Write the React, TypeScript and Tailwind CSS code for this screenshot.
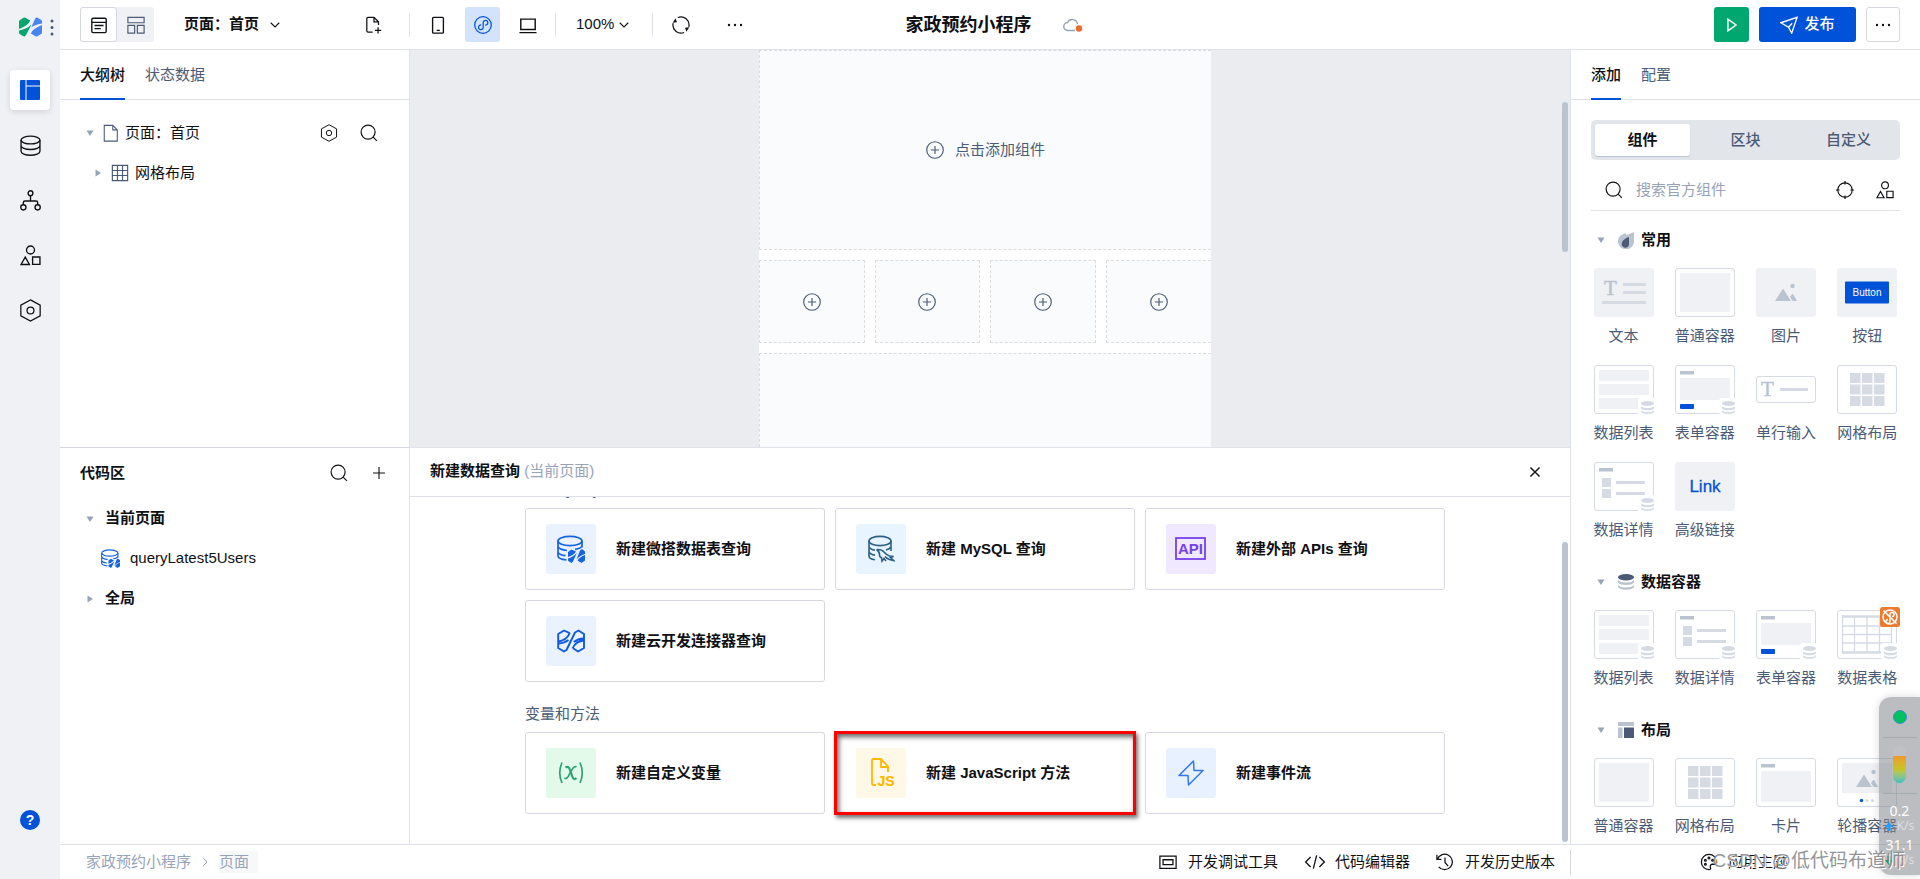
import { useState } from "react";
import type { ReactNode } from "react";

type IconProps = { size?: number; className?: string };

const Svg = ({
  size = 18,
  className = "",
  width = 1.3,
  children,
}: IconProps & { width?: number; children: ReactNode }) => (
  <svg
    width={size}
    height={size}
    viewBox="0 0 20 20"
    fill="none"
    stroke="currentColor"
    strokeWidth={width}
    className={`shrink-0 ${className}`}
    aria-hidden="true"
  >
    {children}
  </svg>
);

/* Icons */
const SearchIcon = (p: IconProps) => (
  <Svg {...p}>
    <circle cx="9" cy="9" r="7.8" />
    <path d="M14.6 14.6 18.8 18.8" />
  </Svg>
);

const HexIcon = (p: IconProps) => (
  <Svg {...p} width={1.1}>
    <path d="M10 .8 18.4 5.4V14.6L10 19.2 1.6 14.6V5.4Z" />
    <circle cx="10" cy="10" r="3" />
  </Svg>
);

const ShapesIcon = (p: IconProps) => (
  <Svg {...p}>
    <circle cx="10" cy="4.8" r="3.8" />
    <path d="M5 11.6 9 18.6H1Z M12 11.4h7v7h-7Z" />
  </Svg>
);

const DatabaseIcon = (p: IconProps) => (
  <Svg {...p}>
    <ellipse cx="10" cy="4.8" rx="9" ry="3.7" />
    <path d="M1 4.8v10.7C1 17.6 5 19.3 10 19.3s9-1.7 9-3.8V4.8M1 10c0 2.1 4 3.8 9 3.8s9-1.7 9-3.8" />
  </Svg>
);

const FlowIcon = (p: IconProps) => (
  <Svg {...p}>
    <circle cx="10" cy="3" r="2.3" />
    <circle cx="3.2" cy="16.5" r="2.5" />
    <circle cx="16.8" cy="16.5" r="2.5" />
    <path d="M10 5.3V10.5M3.2 14V12q0-1.5 1.5-1.5h10.6q1.5 0 1.5 1.5v2" />
  </Svg>
);

const LayoutIcon = () => (
  <svg width="20" height="20" viewBox="0 0 20 20" fill="#0052d9" aria-hidden="true">
    <path d="M1 0h4.5v20H1a1 1 0 0 1-1-1V1a1 1 0 0 1 1-1ZM6.5 0H19a1 1 0 0 1 1 1v4.5H6.5ZM6.5 6.5H20V19a1 1 0 0 1-1 1H6.5Z" />
  </svg>
);

const PlusCircle = (p: IconProps) => (
  <Svg {...p}>
    <circle cx="10" cy="10" r="9.2" />
    <path d="M10 5.5v9M5.5 10h9" />
  </Svg>
);

const PlusIcon = () => (
  <Svg size={14} width={1.6}>
    <path d="M10 1.5v17M1.5 10h17" />
  </Svg>
);

const Chevron = () => (
  <Svg size={10} width={2.2} className="pointer-events-none">
    <path d="M1.5 5.5 10 14l8.5-8.5" />
  </Svg>
);

const Dots = () => (
  <svg width="16" height="4" viewBox="0 0 16 4" fill="currentColor" aria-hidden="true">
    <circle cx="2" cy="2" r="1.2" />
    <circle cx="8" cy="2" r="1.2" />
    <circle cx="14" cy="2" r="1.2" />
  </svg>
);

const Caret = ({ open = true }: { open?: boolean }) => (
  <svg width="8" height="8" viewBox="0 0 8 8" fill="#97a3b7" className="shrink-0" aria-hidden="true">
    {open ? <path d="M.5 1.5h7L4 7Z" /> : <path d="M1.5.5v7L7 4Z" />}
  </svg>
);

const Logo = () => (
  <svg width="23" height="20" viewBox="0 0 23 20" aria-hidden="true">
    <g fill="#07a66c">
      <path d="M0 4.5Q0 3.5 1 3L4.5.8Q5.5.2 6.5.8L11.2 3.5Q10 8 0 12Z" />
      <path d="M0 13.5Q8 12 12.5 7.5L7 18Q6 20.2 4 19L1 17.2Q0 16.5 0 15.5Z" />
    </g>
    <g fill="#4586f3" transform="rotate(180 11.5 10)">
      <path d="M0 4.5Q0 3.5 1 3L4.5.8Q5.5.2 6.5.8L11.2 3.5Q10 8 0 12Z" />
      <path d="M0 13.5Q8 12 10.8 9.5L7 18Q6 20.2 4 19L1 17.2Q0 16.5 0 15.5Z" />
    </g>
  </svg>
);

const WedaTableIcon = ({ size = 28 }: IconProps) => (
  <svg width={size} height={size} viewBox="0 0 28 28" fill="none" stroke="#1664e0" strokeWidth="1.7" className="shrink-0" aria-hidden="true">
    <ellipse cx="13" cy="6" rx="12" ry="4.6" />
    <path d="M1 6v15q0 3 8.5 4M25 6v6.5M1 11.5q1 3 9 4M1 17q1 3 7.5 3.7M25 11q-1 2.5-7 3.3" />
    <g fill="#1664e0" stroke="none">
      <path d="M11 17 14.5 14.5 19 16.5Q17 20 11 22Z" />
      <path d="M11 23.500Q17 21.500 20 17.500L16 26.500 14.500 28 11 25.700Z" />
      <path d="M28 25.500 24.500 28 20.500 25.500Q22.500 22 28 20Z" />
      <path d="M28 19Q22.500 20.500 19.500 24.500L23 15.500 25 14 28 16.500Z" />
    </g>
  </svg>
);

const MysqlIcon = () => (
  <svg width="28" height="28" viewBox="0 0 28 28" fill="none" stroke="#2c5f85" strokeWidth="1.6" aria-hidden="true">
    <ellipse cx="13" cy="6" rx="11" ry="4.6" />
    <path d="M2 6v15q0 3 6 3.8M24 6v10M2 11.5q1 3 6 3.8M2 16.5q1 3 6 3.6M19 15q4-1 5-3.5" />
    <path d="M9.5 14.5q5-.5 7.5 2.5t5.5 4l4 .5-3 1 3 3-4-1q-3-1-4.5-3M9.5 14.5q3 2 3 5t2 3l.5 3.5 2-2.5 2 2.5" />
  </svg>
);

const ApiIcon = () => (
  <svg width="32" height="24" viewBox="0 0 32 24" aria-hidden="true">
    <rect x="1" y="1" width="29" height="21" fill="none" stroke="#7541e8" strokeWidth="1.8" />
    <text x="15.5" y="17" textAnchor="middle" fontSize="15" fill="#7541e8" fontFamily="Liberation Sans, sans-serif">
      API
    </text>
  </svg>
);

const ConnectorIcon = () => (
  <svg width="28" height="24" viewBox="0 0 28 24" fill="none" stroke="#0e5ae0" strokeWidth="1.9" strokeLinejoin="round" aria-hidden="true">
    <path d="M12.8 4.2 7 1.5 1.2 5v14L7 22.5l2.5-1.5L18 3.5 21.5 1.5 27 5v14l-6 3.5-5-3.2" />
    <path d="M1.2 12.5Q9 12 12.8 4.2M1.5 14.5q6-.3 10-3.5M27 11.5Q19 12 15.5 19.3M26.8 9.5q-6 .3-10 3.5" />
  </svg>
);

const VariableIcon = () => (
  <svg width="26" height="24" viewBox="0 0 26 24" fill="none" stroke="#2ba471" strokeWidth="1.7" aria-hidden="true">
    <path d="M4 1.5Q-.5 12 4 22M22 1.5q4.5 10.5 0 20.5" />
    <path d="M7.5 6.5q3-2 4.3 2l2.7 7.5q1.3 3.5 4 1" strokeWidth="2.2" />
    <path d="M18.5 6q-2.5-1.5-5 3.5l-2.5 4.5q-2 4.5-4.5 3" />
  </svg>
);

const JsIcon = () => (
  <svg width="28" height="30" viewBox="0 0 28 30" fill="none" stroke="#ffb800" strokeWidth="1.8" aria-hidden="true">
    <path d="M9 27H6.5Q5 27 5 25.5V2.5Q5 1 6.5 1H14l7 7.5V14M14 1.5V9H21" />
    <text x="10.5" y="28" fontSize="14" fill="#ffb800" strokeWidth=".2" fontFamily="Liberation Sans, sans-serif">
      JS
    </text>
  </svg>
);

const EventIcon = () => (
  <svg width="26" height="26" viewBox="0 0 26 26" fill="none" stroke="#3377f5" strokeWidth="1.5" strokeLinejoin="round" aria-hidden="true">
    <path d="M15.5 1 1 15.5h9L10.5 25 25 10.5h-9Z" />
  </svg>
);

/* Component thumbnails, drawn on a 60 x 49 board */
const Frame = () => <rect x=".5" y=".5" width="59" height="48" rx="2.5" fill="#fff" stroke="#d5dae5" />;
const Board = () => <rect width="60" height="49" rx="3" fill="#f0f1f5" />;

const DbBadge = () => (
  <g>
    <rect x="44" y="33" width="18" height="18" rx="3" fill="#fff" />
    <g fill="#d5dae3">
      <ellipse cx="53.5" cy="38.5" rx="6.5" ry="2.5" />
      <path d="M47 41q1 2 6.5 2t6.5-2v2.2q-1 2-6.5 2t-6.5-2Z" />
      <path d="M47 45q1 2 6.5 2t6.5-2v1.7q-1 2-6.5 2t-6.5-2Z" />
    </g>
  </g>
);

const Mountain = ({ y = 0 }: { y?: number }) => (
  <g fill="#bac4d0" transform={`translate(0 ${y})`}>
    <path d="M19 33 27 20.5 35 33Z M36.5 33 34 29 36 26 37 26 41 33Z" />
    <circle cx="36.5" cy="18" r="2.2" />
  </g>
);

const SerifT = ({ x, y }: { x: number; y: number }) => (
  <text x={x} y={y} fontSize="21" fill="#bac4d0" stroke="#bac4d0" strokeWidth=".5" fontFamily="Liberation Serif, serif">
    T
  </text>
);

const Thumb = ({ kind }: { kind: string }) => {
  switch (kind) {
    case "text":
      return (
        <>
          <Board />
          <SerifT x={10} y={27} />
          <path d="M29 16.5h23M29 24.5h23M8 34.5h44" stroke="#d5dae5" strokeWidth="3" />
        </>
      );
    case "container":
      return (
        <>
          <Frame />
          <rect x="5" y="5" width="50" height="39" rx="1" fill="#f0f1f5" />
        </>
      );
    case "image":
      return (
        <>
          <Board />
          <Mountain />
        </>
      );
    case "button":
      return (
        <>
          <Board />
          <rect x="8" y="13.5" width="44" height="22" rx="1" fill="#0052d9" />
          <text x="30" y="28" textAnchor="middle" fontSize="10" fill="#fff" fontFamily="Liberation Sans, sans-serif">
            Button
          </text>
        </>
      );
    case "list":
      return (
        <>
          <Frame />
          <path d="M5 5h50v11H5ZM5 19h50v11H5ZM5 33h50v11H5Z" fill="#f0f1f5" />
          <DbBadge />
        </>
      );
    case "form":
      return (
        <>
          <Frame />
          <rect x="5" y="6" width="14" height="3.5" fill="#bac4d0" />
          <rect x="5" y="13" width="50" height="22" fill="#f0f1f5" />
          <rect x="5" y="39" width="14" height="5" rx="1" fill="#0052d9" />
          <DbBadge />
        </>
      );
    case "input":
      return (
        <>
          <rect x=".5" y="11.5" width="59" height="26" rx="2.5" fill="#fff" stroke="#d5dae5" />
          <SerifT x={5} y={31} />
          <path d="M24 24.5h28" stroke="#d5dae5" strokeWidth="3" />
        </>
      );
    case "grid":
      return (
        <>
          <Frame />
          {[13, 25, 37].map((x) =>
            [8, 19.5, 31].map((y) => (
              <rect key={`${x}-${y}`} x={x} y={y} width="10.5" height="10" fill="#d5dae3" />
            ))
          )}
        </>
      );
    case "detail":
      return (
        <>
          <Frame />
          <rect x="5" y="6" width="14" height="3.5" fill="#bac4d0" />
          <path d="M8 16h9v9H8ZM8 27h9v9H8Z" fill="#d5dae3" />
          <path d="M22 20.5h29M22 31.5h29" stroke="#d5dae3" strokeWidth="3" />
          <DbBadge />
        </>
      );
    case "link":
      return (
        <>
          <Board />
          <text x="30" y="30" textAnchor="middle" fontSize="17" fill="#0052d9" stroke="#0052d9" strokeWidth=".3" fontFamily="Liberation Sans, sans-serif">
            Link
          </text>
        </>
      );
    case "table":
      return (
        <>
          <Frame />
          <path d="M5.5 5v38M17.5 7v36M30 7v36M42.5 7v36M54.5 5v38M5 16h50M5 24.5h50M5 33h50" stroke="#d5dae5" strokeWidth="1.3" />
          <path d="M5 6.5h50M5 42.5h50" stroke="#d5dae5" strokeWidth="2.5" />
          <DbBadge />
          <rect x="43" y="-3" width="20" height="20" rx="2.5" fill="#ed7b2f" />
          <g fill="none" stroke="#fff" strokeWidth="1.5">
            <circle cx="53" cy="7" r="7" />
            <path d="M51 9.500a2 2 0 1 0 2 1.500V4.500a2 2 0 1 1 2 2M46.500.5l13 13" />
          </g>
        </>
      );
    case "card":
      return (
        <>
          <Frame />
          <rect x="5" y="6" width="14" height="3.5" fill="#bac4d0" />
          <rect x="5" y="13" width="50" height="31" fill="#f0f1f5" />
        </>
      );
    default:
      return (
        <>
          <Frame />
          <rect x="5" y="5" width="50" height="30" fill="#f0f1f5" />
          <Mountain y={-4} />
          <circle cx="24.5" cy="42.5" r="1.7" fill="#0052d9" />
          <circle cx="30" cy="42.5" r="1.5" fill="#d5dae3" />
          <circle cx="35.5" cy="42.5" r="1.5" fill="#d5dae3" />
        </>
      );
  }
};

const flameIcon = (
  <svg width="16" height="17" viewBox="0 0 16 17" aria-hidden="true">
    <path d="M16 0v9a8 8 0 1 1-14-5Q5 2 8 1v2q4-1 8-3Z" fill="#bac4d0" />
    <path d="M11 5v6.5a3.7 3.7 0 1 1-7-1Q5 7 11 5Z" fill="#4b5b76" />
  </svg>
);

const stackIcon = (
  <svg width="16" height="16" viewBox="0 0 16 16" fill="#bac4d0" aria-hidden="true">
    <ellipse cx="8" cy="3.3" rx="8" ry="3.2" fill="#4b5b76" />
    <path d="M0 6q2 2.5 8 2.5T16 6v2.5q-2 2.5-8 2.5T0 8.5ZM0 11q2 2.5 8 2.5t8-2.5v2q-2 2.8-8 2.8T0 13Z" />
  </svg>
);

const columnsIcon = (
  <svg width="16" height="16" viewBox="0 0 16 16" fill="#bac4d0" aria-hidden="true">
    <path d="M0 0h16v4H0ZM0 5.5h4.5V16H0Z" />
    <path d="M6 5.5h10V16H6Z" fill="#4b5b76" />
  </svg>
);

const categories = [
  {
    name: "常用",
    icon: flameIcon,
    items: [
      ["文本", "text"],
      ["普通容器", "container"],
      ["图片", "image"],
      ["按钮", "button"],
      ["数据列表", "list"],
      ["表单容器", "form"],
      ["单行输入", "input"],
      ["网格布局", "grid"],
      ["数据详情", "detail"],
      ["高级链接", "link"],
    ],
  },
  {
    name: "数据容器",
    icon: stackIcon,
    items: [
      ["数据列表", "list"],
      ["数据详情", "detail"],
      ["表单容器", "form"],
      ["数据表格", "table"],
    ],
  },
  {
    name: "布局",
    icon: columnsIcon,
    items: [
      ["普通容器", "container"],
      ["网格布局", "grid"],
      ["卡片", "card"],
      ["轮播容器", "carousel"],
    ],
  },
];

const queryCards = [
  { label: "新建微搭数据表查询", bg: "bg-[#ebf2ff]", icon: <WedaTableIcon /> },
  { label: "新建 MySQL 查询", bg: "bg-[#e8f4ff]", icon: <MysqlIcon /> },
  { label: "新建外部 APIs 查询", bg: "bg-[#f0e8ff]", icon: <ApiIcon /> },
  { label: "新建云开发连接器查询", bg: "bg-[#ebf2ff]", icon: <ConnectorIcon /> },
];

const methodCards = [
  { label: "新建自定义变量", bg: "bg-[#e3f9e9]", icon: <VariableIcon /> },
  { label: "新建 JavaScript 方法", bg: "bg-[#fff8e6]", icon: <JsIcon />, marked: true },
  { label: "新建事件流", bg: "bg-[#e8f1ff]", icon: <EventIcon /> },
];

const Card = ({ label, bg, icon, marked }: { label: string; bg: string; icon: ReactNode; marked?: boolean }) => (
  <button className="relative flex h-[82px] items-center gap-5 rounded-[3px] border border-[#d5d8e2] bg-white px-5 text-left font-bold">
    <span className={`flex size-[50px] shrink-0 items-center justify-center rounded-[3px] ${bg}`}>{icon}</span>
    <span>{label}</span>
    {marked && (
      <span className="absolute -inset-[2px] border-3 border-[#ff0000] shadow-[2px_3px_4px_rgba(0,0,0,0.55),inset_2px_3px_5px_rgba(0,0,0,0.6)]" />
    )}
  </button>
);

const Tabs = ({ items }: { items: string[] }) => {
  const [active, setActive] = useState(items[0]);
  return (
    <div className="flex h-[50px] shrink-0 gap-5 border-b border-[#dfe2e8] px-5">
      {items.map((item) => (
        <button
          key={item}
          onClick={() => setActive(item)}
          className={
            item === active
              ? "-mb-px border-b-2 border-[#0052d9] pt-[3px] font-medium"
              : "-mb-px border-b-2 border-transparent pt-[3px] text-[#4b5b76]"
          }
        >
          {item}
        </button>
      ))}
    </div>
  );
};

const Sidebar = () => (
  <nav className="flex w-[60px] shrink-0 flex-col items-center bg-[#f0f1f5] pb-[49px]">
    <div className="flex h-[70px] items-start gap-2 pt-[17px] pl-3">
      <Logo />
      <svg width="4" height="20" viewBox="0 0 4 20" fill="#4b5b76" aria-hidden="true">
        <circle cx="2" cy="4" r="1.5" />
        <circle cx="2" cy="10.5" r="1.5" />
        <circle cx="2" cy="17" r="1.5" />
      </svg>
    </div>
    <div className="flex flex-1 flex-col gap-[15px]">
      {[
        { name: "页面", icon: <LayoutIcon /> },
        { name: "数据", icon: <DatabaseIcon size={21} /> },
        { name: "流程", icon: <FlowIcon size={21} /> },
        { name: "组件库", icon: <ShapesIcon size={21} /> },
        { name: "设置", icon: <HexIcon size={23} /> },
      ].map((item, i) => (
        <button
          key={item.name}
          aria-label={item.name}
          className={
            i === 0
              ? "flex size-10 items-center justify-center rounded bg-white shadow-[0_2px_6px_rgba(0,0,0,0.12)]"
              : "flex size-10 items-center justify-center"
          }
        >
          {item.icon}
        </button>
      ))}
    </div>
    <button aria-label="帮助" className="flex size-5 items-center justify-center rounded-full bg-[#0052d9] text-sm font-bold text-white">
      ?
    </button>
  </nav>
);

const Divider = () => <span className="h-6 w-px bg-[#dfe2e8]" />;

const Header = () => (
  <header className="flex h-[50px] shrink-0 items-center border-b border-[#dfe2e8] px-5">
    <div className="flex flex-1 items-center">
      <div className="flex h-[35px] w-[74px] rounded-[3px] bg-[#f0f1f5]">
        <button aria-label="编辑" className="flex w-[37px] items-center justify-center rounded-[3px] border border-[#d5d8e2] bg-white">
          <Svg size={18} width={1.5}>
            <rect x="2" y="2.5" width="16" height="16" rx="1.5" />
            <path d="M2 7h16M5 10.5h10M5 14h7" />
          </Svg>
        </button>
        <button aria-label="布局" className="flex w-[37px] items-center justify-center text-[#4b5b76]">
          <Svg size={18} width={1.3}>
            <path d="M1 1.5h18v6H1ZM1 10.5h7.5v8.5H1ZM11.5 10.5H19v8.5h-7.5Z" />
          </Svg>
        </button>
      </div>
      <label className="ml-[30px] flex w-[181px] items-center gap-[10px]">
        <select aria-label="页面" className="appearance-none font-bold outline-none">
          <option>页面：首页</option>
        </select>
        <Chevron />
      </label>
      <div className="flex items-center">
        <button aria-label="新建页面" className="flex w-[18px] justify-center">
          <Svg size={18} width={1.4}>
            <path d="M8.5 18H3.5Q2 18 2 16.5V3Q2 1.5 3.5 1.5H10l5 5V10M10 1.5v5h5M14.5 12.5v7M11 16h7" />
          </Svg>
        </button>
        <span className="ml-[26px] flex items-center gap-[10px]">
          <Divider />
          <button aria-label="手机" className="flex size-[35px] items-center justify-center">
            <Svg size={18} width={1.5}>
              <rect x="4" y="1.5" width="12" height="17.5" rx="1" />
              <path d="M8.5 16h3.5" />
            </Svg>
          </button>
          <button aria-label="小程序" className="flex size-[35px] items-center justify-center rounded-[3px] bg-[#d4e3fc] text-[#0052d9]">
            <Svg size={18} width={1.4}>
              <circle cx="10" cy="10" r="9.2" />
              <path d="M8 10a2.6 2.6 0 1 0 2.2 2.6V7.4A2.6 2.6 0 1 1 12.4 10" />
            </Svg>
          </button>
          <button aria-label="电脑" className="flex size-[35px] items-center justify-center">
            <Svg size={18} width={1.6}>
              <path d="M2 3.5h16V15H2ZM.5 18.5h19" />
            </Svg>
          </button>
          <Divider />
        </span>
        <label className="ml-5 flex items-center gap-[4px]">
          <select aria-label="缩放" className="appearance-none outline-none">
            <option>100%</option>
          </select>
          <Chevron />
        </label>
        <span className="ml-[23px] flex items-center">
          <Divider />
          <button aria-label="刷新" className="mr-[37px] ml-[19px] flex">
            <Svg size={18} width={1.4}>
              <path d="M6.5 1.7A9 9 0 0 1 18.7 12M13.5 18.3A9 9 0 0 1 1.3 8" />
              <path d="M4 2.5.8 7.5 5.5 7ZM16 17.5l3.2-5-4.7.5Z" fill="currentColor" stroke="none" />
            </Svg>
          </button>
          <button aria-label="更多">
            <Dots />
          </button>
        </span>
      </div>
    </div>
    <div className="flex items-center gap-[31px] pl-2">
      <h1 className="text-lg font-bold">家政预约小程序</h1>
      <svg width="20" height="16" viewBox="0 0 20 16" fill="none" aria-hidden="true">
        <path d="M12 13.5H5A4 4 0 0 1 4.5 5.5 5.3 5.3 0 0 1 14.5 7" stroke="#97a3b7" strokeWidth="1.4" />
        <circle cx="16" cy="11.5" r="3.2" fill="#ed6b2f" />
      </svg>
    </div>
    <div className="flex flex-1 items-center justify-end gap-[10px]">
      <button aria-label="预览" className="flex size-[35px] items-center justify-center rounded-[3px] bg-[#00a870] text-white">
        <Svg size={18} width={1.6}>
          <path d="M5.5 3.5v13L14.5 10Z" />
        </Svg>
      </button>
      <button className="flex h-[35px] w-[97px] items-center justify-center gap-[6px] rounded-[3px] bg-[#0052d9] font-medium text-white">
        <Svg size={18} width={1.5}>
          <path d="M1 7.5 19 1.5 13 19 9.5 12.5ZM9.5 12.5 13.5 8" />
        </Svg>
        发布
      </button>
      <button aria-label="更多操作" className="flex h-[35px] w-[34px] items-center justify-center rounded-[3px] border border-[#d5d8e2]">
        <Dots />
      </button>
    </div>
  </header>
);

const LeftPanel = () => (
  <aside className="flex w-[350px] shrink-0 flex-col border-r border-[#dfe2e8]">
    <section className="flex min-h-0 flex-1 flex-col">
      <Tabs items={["大纲树", "状态数据"]} />
      <div className="pt-[13px]">
        <div className="flex h-10 items-center pr-[31px] pl-[26px]">
          <Caret />
          <Svg size={18} width={1.2} className="mr-[5px] ml-2 text-[#4b5b76]">
            <path d="M2.5 1.5h9.5l5 5v12.5h-14.5ZM12 1.5v5h5" />
          </Svg>
          <span className="flex-1">页面：首页</span>
          <button aria-label="页面设置" className="mr-[22px]">
            <HexIcon />
          </button>
          <button aria-label="搜索">
            <SearchIcon />
          </button>
        </div>
        <div className="flex h-10 items-center pl-[34px]">
          <Caret open={false} />
          <Svg size={18} width={1.3} className="mr-[6px] ml-[9px] text-[#4b5b76]">
            <path d="M1.5 1.5h17v17h-17ZM7.2 1.5v17M12.8 1.5v17M1.5 7.2h17M1.5 12.8h17" />
          </Svg>
          网格布局
        </div>
      </div>
    </section>
    <section className="min-h-0 flex-1 border-t border-[#d5d8e2]">
      <div className="flex h-[51px] items-center pr-[23px] pl-5">
        <h2 className="flex-1 font-bold">代码区</h2>
        <button aria-label="搜索代码" className="mr-6">
          <SearchIcon />
        </button>
        <button aria-label="新建代码">
          <PlusIcon />
        </button>
      </div>
      <div className="flex h-10 items-center gap-[11px] pl-[26px] font-bold">
        <Caret />
        当前页面
      </div>
      <div className="flex h-10 items-center gap-[10px] pl-[41px]">
        <WedaTableIcon size={19} />
        queryLatest5Users
      </div>
      <div className="flex h-10 items-center gap-[11px] pl-[26px] font-bold">
        <Caret open={false} />
        全局
      </div>
    </section>
  </aside>
);

const Canvas = () => (
  <section className="flex min-h-0 flex-1 overflow-hidden bg-[#ebecf0]">
    <div className="flex flex-1 justify-center">
      <div className="flex w-[452px] flex-col gap-[10px] bg-white text-[#4b5b76]">
        <button className="flex h-[200px] shrink-0 items-center justify-center gap-[11px] border border-r-0 border-dashed border-[#dcdcdc] bg-[#fafbfd]">
          <PlusCircle />
          点击添加组件
        </button>
        <div className="grid shrink-0 grid-cols-4 gap-[10px]">
          {[0, 1, 2, 3].map((i) => (
            <button
              key={i}
              aria-label="添加组件"
              className="flex h-[83px] items-center justify-center border border-dashed border-[#dcdcdc] bg-[#fafbfd] last:border-r-0"
            >
              <PlusCircle />
            </button>
          ))}
        </div>
        <div className="flex-1 border border-r-0 border-b-0 border-dashed border-[#dcdcdc] bg-[#fafbfd]" />
      </div>
    </div>
    <div className="w-[10px] px-[2px] pt-[52px]">
      <div className="h-[150px] rounded-full bg-[#bac4d0]" />
    </div>
  </section>
);

const QueryPanel = () => (
  <section className="flex min-h-0 flex-1 flex-col border-t border-[#dfe2e8]">
    <div className="flex h-[49px] shrink-0 items-center border-b border-[#dfe2e8] pr-7 pl-5">
      <h2 className="flex-1 font-bold">
        新建数据查询 <span className="font-normal text-[#97a3b7]">(当前页面)</span>
      </h2>
      <button aria-label="关闭">
        <Svg size={14} width={2}>
          <path d="M3.5 3.5l13 13M16.5 3.5l-13 13" />
        </Svg>
      </button>
    </div>
    <div className="flex min-h-0 flex-1">
      <div className="flex min-w-0 flex-1 flex-col items-center justify-end overflow-hidden pb-[30px]">
        <div className="w-[920px] max-w-full">
          <h3 className="mb-2 leading-5 text-[#4b5b76]">查询 Query</h3>
          <div className="grid grid-cols-3 gap-[10px]">
            {queryCards.map((card) => (
              <Card key={card.label} {...card} />
            ))}
          </div>
          <h3 className="mt-[22px] mb-2 leading-5 text-[#4b5b76]">变量和方法</h3>
          <div className="grid grid-cols-3 gap-[10px]">
            {methodCards.map((card) => (
              <Card key={card.label} {...card} />
            ))}
          </div>
        </div>
      </div>
      <div className="flex w-[10px] flex-col justify-end px-[2px] pb-[2px]">
        <div className="h-[300px] rounded-full bg-[#bac4d0]" />
      </div>
    </div>
  </section>
);

const RightPanel = () => {
  const [tab, setTab] = useState("组件");
  const [keyword, setKeyword] = useState("");

  return (
    <aside className="flex w-[350px] shrink-0 flex-col overflow-hidden border-l border-[#dfe2e8]">
      <Tabs items={["添加", "配置"]} />
      <div className="px-5 pt-5">
        <div className="grid h-10 grid-cols-3 rounded-[5px] bg-[#e2e5ea] font-medium">
          {["组件", "区块", "自定义"].map((name) => (
            <button
              key={name}
              onClick={() => setTab(name)}
              className={name === tab ? "m-1 rounded-[3px] bg-white font-bold shadow-[0_1px_1px_#bac4d0]" : "m-1 text-[#4b5b76]"}
            >
              {name}
            </button>
          ))}
        </div>
        <div className="flex h-[51px] items-center border-b border-[#dfe2e8] pt-[10px] pr-[6px] pl-[14px]">
          <SearchIcon />
          <input
            value={keyword}
            onChange={(e) => setKeyword(e.target.value)}
            aria-label="搜索官方组件"
            placeholder="搜索官方组件"
            className="ml-[13px] min-w-0 flex-1 outline-none placeholder:text-[#97a3b7]"
          />
          <button aria-label="定位" className="mr-[22px]">
            <Svg size={18} width={1.3}>
              <circle cx="10" cy="10" r="8" />
              <path d="M10 0v4M10 16V20M0 10h4M16 10H20" />
            </Svg>
          </button>
          <button aria-label="组件库">
            <ShapesIcon />
          </button>
        </div>
      </div>
      <div className="min-h-0 flex-1 overflow-hidden pt-[9px]">
        {categories.map((category) => (
          <section key={category.name} className="mb-[21px]">
            <h3 className="flex h-10 items-center pl-[26px] font-bold">
              <Caret />
              <span className="mr-[7px] ml-[13px]">{category.icon}</span>
              {category.name}
            </h3>
            <div className="mt-2 grid grid-cols-4 gap-y-[18px] px-3">
              {category.items.map(([label, kind]) => (
                <button key={label} className="flex flex-col items-center gap-2 text-[#4b5b76]">
                  <svg width="60" height="49" viewBox="0 0 60 49" className="overflow-visible" aria-hidden="true">
                    <Thumb kind={kind} />
                  </svg>
                  <span className="leading-[22px]">{label}</span>
                </button>
              ))}
            </div>
          </section>
        ))}
      </div>
    </aside>
  );
};

const Footer = () => (
  <footer className="flex h-[35px] shrink-0 items-center border-t border-[#dfe2e8]">
    <div className="flex flex-1 items-center pl-[26px] text-[#97a3b7]">
      <a href="#app">家政预约小程序</a>
      <Svg size={10} width={2} className="mx-[9px]">
        <path d="M6 1.5 14 10l-8 8.5" />
      </Svg>
      <a href="#page" className="bg-[#f7f8fa] pr-[9px]">
        页面
      </a>
    </div>
    <div className="flex gap-[26px] pr-[15px]">
      <button className="flex items-center gap-[11px]">
        <Svg size={18} width={1.4}>
          <path d="M1 3.5h18v13.5H1ZM4.5 7.5h11v5.5h-11Z" />
        </Svg>
        开发调试工具
      </button>
      <button className="flex items-center gap-[9px]">
        <Svg size={22} width={1.2}>
          <path d="M6 5.5 1.5 10 6 14.5M14 5.5l4.5 4.5-4.5 4.5M11.5 4l-3 12" />
        </Svg>
        代码编辑器
      </button>
      <button className="flex items-center gap-[11px]">
        <Svg size={18} width={1.4}>
          <path d="M1 2v5h5M1.5 7A8.6 8.6 0 1 1 3 15.5M10 5v5.5l3.5 4" />
        </Svg>
        开发历史版本
      </button>
    </div>
    <div className="flex h-[25px] w-[350px] items-center border-l border-[#d5d8e2] pl-[129px]">
      <button className="flex items-center gap-[10px]">
        <Svg size={18} width={1.4}>
          <path d="M10 1.5a8.5 8.5 0 1 0 0 17c2 0 2-1.5 1.5-2.5-.7-2 .5-3.5 2.5-3.5h2c1.500 0 2.500-1 2.500-2.500A8.500 8.500 0 0 0 10 1.500Z" />
          <circle cx="6" cy="8" r="1" />
          <circle cx="10" cy="5.5" r="1" />
          <circle cx="14" cy="8" r="1" />
          <circle cx="6" cy="12.5" r="1" />
        </Svg>
        应用主题
      </button>
    </div>
  </footer>
);

/* Network speed monitor floating over the page */
const SpeedWidget = () => (
  <div className="absolute right-0 bottom-1 flex h-[178px] w-[41px] flex-col items-center rounded-l-[12px] bg-[#84868c]/55 pt-[13px] text-white shadow-[0_0_8px_rgba(0,0,0,0.15)]">
    <span className="size-[14px] rounded-full border border-[#3c8fd0] bg-[#00c060]" />
    <span className="mt-[13px] h-px w-[34px] bg-[#9a9ca1]/60" />
    <span className="mt-2 flex h-[37px] w-[13px] items-end overflow-hidden rounded-full bg-[#c0c1c6]">
      <span className="h-[27px] w-full bg-linear-to-b from-[#ed9a2a] via-[#c5c528] to-[#2bc0c0]" />
    </span>
    <span className="mt-[10px] h-px w-[34px] bg-[#8fa3a5]/60" />
    <span className="mt-[9px] font-[Noto_Sans] text-sm leading-4">0.2</span>
    <span className="flex items-center gap-1 font-[Noto_Sans] text-xs leading-[14px] text-[#dcdde0]">
      <svg width="8" height="9" viewBox="0 0 8 9" fill="#1ea0ff" aria-hidden="true">
        <path d="M4 0 8 5H5.5V9h-3V5H0Z" />
      </svg>
      K/s
    </span>
    <span className="mt-1 font-[Noto_Sans] text-sm leading-4">31.1</span>
    <span className="flex items-center gap-1 font-[Noto_Sans] text-xs leading-[14px] text-[#dcdde0]">
      <svg width="8" height="9" viewBox="0 0 8 9" fill="#12a05a" aria-hidden="true">
        <path d="M4 9 0 4h2.5V0h3v4H8Z" />
      </svg>
      K/s
    </span>
  </div>
);

export default function App() {
  return (
    <div className="relative flex h-screen overflow-hidden bg-white font-['Liberation_Sans','Noto_Sans_CJK_SC',sans-serif] text-[15px] text-[#0f1115]">
      <Sidebar />
      <div className="flex min-w-0 flex-1 flex-col">
        <Header />
        <div className="flex min-h-0 flex-1">
          <LeftPanel />
          <main className="flex min-w-0 flex-1 flex-col">
            <Canvas />
            <QueryPanel />
          </main>
          <RightPanel />
        </div>
        <Footer />
      </div>
      <SpeedWidget />
      <span className="pointer-events-none absolute right-[15px] bottom-1 text-[19px] text-[#85878c]/90 text-shadow-[1px_1px_0_#fff]">
        CSDN @低代码布道师
      </span>
    </div>
  );
}
